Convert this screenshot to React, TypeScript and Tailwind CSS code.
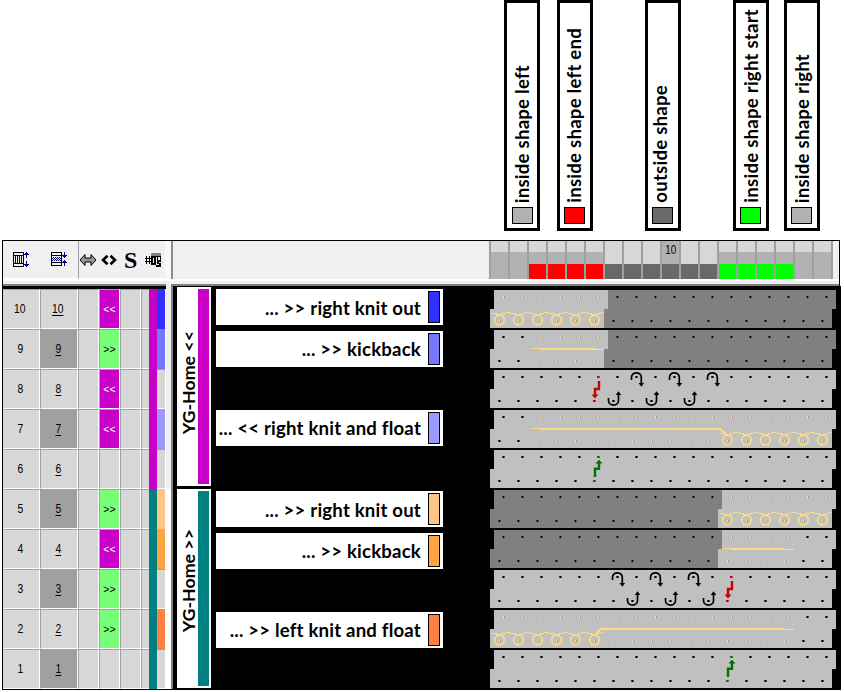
import clsx from "clsx";

type DotColor = "black" | "yellow" | "red" | "green";

interface KnitRow {
  no: number;
  dir?: "<<" | ">>";
  group: "left" | "right";
  tag?: string;
  // needle range covered by yarn, inclusive
  yarn?: [number, number];
  loops?: [number, number];
  // float line segments as [x1, x2, y, thickness]
  floats?: [number, number, number, number][];
  ramp?: string;
  shade?: "in" | "out";
  transferTop?: number[];
  transferBottom?: number[];
  carrier?: { needle: number; kind: "red" | "green" };
}

const PITCH = 19;
const NEEDLES = Array.from({ length: 18 }, (_, i) => i);

const ROWS: KnitRow[] = [
  { no: 10, dir: "<<", group: "left", tag: "bg-[#3030ff]", yarn: [0, 5], loops: [0, 5], shade: "out" },
  {
    no: 9,
    dir: ">>",
    group: "left",
    tag: "bg-[#7878ff]",
    yarn: [2, 5],
    floats: [
      [42, 51, 18, 1],
      [51, 105, 18, 2],
      [105, 114, 19, 1],
    ],
    shade: "out",
  },
  {
    no: 8,
    dir: "<<",
    group: "left",
    transferTop: [7, 9, 11],
    transferBottom: [6, 8, 10],
    carrier: { needle: 5, kind: "red" },
  },
  {
    no: 7,
    dir: "<<",
    group: "left",
    tag: "bg-[#9999ff]",
    yarn: [2, 17],
    loops: [12, 17],
    floats: [
      [42, 51, 18, 1],
      [51, 229, 18, 2],
    ],
    ramp: "M228 19 H230 L236 24",
  },
  { no: 6, group: "left", carrier: { needle: 5, kind: "green" } },
  { no: 5, dir: ">>", group: "right", tag: "bg-[#ffc488]", yarn: [12, 17], loops: [12, 17], shade: "in" },
  {
    no: 4,
    dir: "<<",
    group: "right",
    tag: "bg-[#ffa345]",
    yarn: [12, 15],
    floats: [
      [232, 241, 18, 1],
      [241, 295, 18, 2],
      [295, 304, 19, 1],
    ],
    shade: "in",
  },
  {
    no: 3,
    dir: ">>",
    group: "right",
    transferTop: [6, 8, 10],
    transferBottom: [7, 9, 11],
    carrier: { needle: 12, kind: "red" },
  },
  {
    no: 2,
    dir: ">>",
    group: "right",
    tag: "bg-[#ff8040]",
    yarn: [0, 15],
    loops: [0, 5],
    floats: [
      [111, 295, 18, 2],
      [295, 304, 19, 1],
    ],
    ramp: "M106 24 L111 19 H113",
  },
  { no: 1, group: "right", carrier: { needle: 12, kind: "green" } },
];

const LEGEND = [
  { text: "inside shape left", swatch: "ml-[5px] bg-[#b2b2b2]", box: "ml-[504px]", label: "ml-[4px]" },
  { text: "inside shape left end", swatch: "ml-1 bg-[#ff0000]", box: "ml-[17px]", label: "ml-[3px]" },
  { text: "outside shape", swatch: "ml-1 bg-[#696969]", box: "ml-[52px]", label: "ml-px" },
  { text: "inside shape right start", swatch: "ml-1 bg-[#00ff00]", box: "ml-[52px]", label: "ml-[4px]" },
  { text: "inside shape right", swatch: "ml-1 bg-[#b2b2b2]", box: "ml-[15px]", label: "ml-[4px]" },
];

const LABELS = [
  { text: "... >> right knit out", swatch: "bg-[#3030ff]", gap: "mt-[3px]", drop: "pt-[2px]" },
  { text: "... >> kickback", swatch: "bg-[#7878ff]", gap: "mt-[6px]", drop: "pt-px" },
  { text: "... << right knit and float", swatch: "bg-[#9999ff]", gap: "mt-[43px]", drop: "pt-px" },
  { text: "... >> right knit out", swatch: "bg-[#ffc488]", gap: "mt-[45px]", drop: "pt-[2px]" },
  { text: "... >> kickback", swatch: "bg-[#ffa345]", gap: "mt-[6px]", drop: "pt-px" },
  { text: "... >> left knit and float", swatch: "bg-[#ff8040]", gap: "mt-[43px]", drop: "pt-px" },
];

const DOTS: Record<DotColor, [string, string, string]> = {
  black: ["#20486c", "#000000", "#6c4828"],
  yellow: ["#f0a090", "#ffe690", "#a0a070"],
  red: ["#c80032", "#c80000", "#c83232"],
  green: ["#007832", "#007800", "#4a7a20"],
};

function Dot({ x, y, color }: { x: number; y: number; color: DotColor }) {
  return (
    <g shapeRendering="crispEdges">
      {DOTS[color].map((fill, i) => (
        <rect key={i} x={x + i} y={y} width={1} height={2} fill={fill} />
      ))}
    </g>
  );
}

function Loop({ x, last }: { x: number; last: boolean }) {
  const left = x - 0.5;
  return (
    <g fill="#fcdc84">
      <circle cx={x} cy={30} r={4.9} stroke="#f8dc84" strokeWidth={1.8} fill="none" />
      <g shapeRendering="crispEdges">
        <rect x={left - 7} y={23} width={5} height={1} />
        <rect x={left - 3} y={24} width={7} height={1} />
        <rect x={left + 3} y={23} width={4} height={1} />
        <rect x={left + 7} y={22} width={last ? 3 : 5} height={1} />
      </g>
    </g>
  );
}

/** One stitch row: front needle bed above, back bed shifted 4px to the left. */
function StitchRow({ row }: { row: KnitRow }) {
  const colorAt = (n: number): DotColor => {
    if (row.carrier?.needle === n) return row.carrier.kind;
    if (row.yarn && n >= row.yarn[0] && n <= row.yarn[1]) return "yellow";
    return "black";
  };
  const cx = row.carrier ? row.carrier.needle * PITCH + 13.5 : 0;

  return (
    <svg width={346} height={38} viewBox="0 0 346 38" className="block">
      <g shapeRendering="crispEdges">
        <path d="M4 0 H346 V19 H342 V38 H0 V19 H4 Z" fill="#c0c0c0" />
        {row.shade === "out" && <path d="M118 0 H346 V19 H342 V38 H114 V19 H118 Z" fill="#808080" />}
        {row.shade === "in" && <path d="M4 0 H232 V19 H228 V38 H0 V19 H4 Z" fill="#808080" />}
      </g>
      {row.floats?.map(([x1, x2, y, h]) => (
        <rect key={x1} x={x1} y={y} width={x2 - x1} height={h} fill="#fcdc84" />
      ))}
      {row.ramp && <path d={row.ramp} stroke="#fcdc84" strokeWidth={1.8} fill="none" />}
      {row.loops &&
        NEEDLES.filter((n) => n >= row.loops![0] && n <= row.loops![1]).map((n) => (
          <Loop key={n} x={n * PITCH + 9.5} last={n === row.loops![1]} />
        ))}
      {NEEDLES.map((n) => (
        <g key={n}>
          <Dot x={12 + n * PITCH} y={6} color={colorAt(n)} />
          <Dot x={8 + n * PITCH} y={30} color={colorAt(n)} />
        </g>
      ))}
      {row.transferTop?.map((n) => {
        const x = n * PITCH + 13.5;
        return (
          <g key={n}>
            <path
              d={`M${x - 5} 10 V7.5 C${x - 5} 1.2 ${x + 4.8} 1.2 ${x + 4.8} 7.5 V14`}
              stroke="#000"
              strokeWidth={1.7}
              fill="none"
            />
            <path d={`M${x + 2} 13 h5.6 l-2.8 3.8 z`} />
          </g>
        );
      })}
      {row.transferBottom?.map((n) => {
        const x = n * PITCH + 9.5;
        return (
          <g key={n}>
            <path
              d={`M${x - 5} 28 V30.5 C${x - 5} 36.6 ${x + 5} 36.6 ${x + 5} 30.5 V24`}
              stroke="#000"
              strokeWidth={1.7}
              fill="none"
            />
            <path d={`M${x + 2.2} 25 h5.6 l-2.8 -3.8 z`} />
          </g>
        );
      })}
      {row.carrier?.kind === "red" && (
        <g>
          <path d={`M${cx + 0.5} 11 V19 H${cx - 3.5} V26`} stroke="#c80000" strokeWidth={2.4} fill="none" />
          <path d={`M${cx - 7} 24.6 h7 l-3.5 3.8 z`} fill="#c80000" />
        </g>
      )}
      {row.carrier?.kind === "green" && (
        <g>
          <path d={`M${cx - 3.5} 27 V18.8 H${cx + 0.5} V12`} stroke="#007000" strokeWidth={2.4} fill="none" />
          <path d={`M${cx - 3} 13.6 h7 l-3.5 -3.8 z`} fill="#007000" />
        </g>
      )}
    </svg>
  );
}

function Legend() {
  return (
    <div className="flex h-[240px] items-start">
      {LEGEND.map((item) => (
        <div
          key={item.text}
          className={clsx(
            "flex h-[231px] w-9 shrink-0 flex-col items-start justify-end border-[3px] border-black pb-1",
            item.box,
          )}
        >
          <span
            className={clsx(
              "mb-[4px] rotate-180 whitespace-nowrap text-[18.6px] leading-[22px] font-bold tracking-[0.24px] [writing-mode:vertical-rl]",
              item.label,
            )}
          >
            {item.text}
          </span>
          <span className={clsx("h-[17px] w-[21px] shrink-0 border border-black", item.swatch)} />
        </div>
      ))}
    </div>
  );
}

function RowIcon({ tall }: { tall?: boolean }) {
  return (
    <svg width={18} height={18} viewBox="0 0 18 18" fill="none" shapeRendering="crispEdges">
      {tall ? (
        <>
          <path d="M.5 1 V16 M10.5 1 V16 M0 1.5 H11 M0 4.5 H11 M0 12.5 H11 M0 15.5 H11" stroke="#000" />
          <path d="M2.5 5 V12 M4.5 5 V12 M6.5 5 V12 M8.5 5 V12" stroke="#000080" />
          <path d="M13.5 1 V7 M13.5 10 V16 M12 2.5 H15 M11 3.5 h5 M11 13.5 h5 M12 14.5 H15" stroke="#000080" />
        </>
      ) : (
        <>
          <path d="M.5 1 V15 M10.5 1 V15 M0 1.5 H11 M0 4.5 H11 M0 11.5 H11 M0 14.5 H11" stroke="#000" />
          <path d="M2 6.5 H10 M2 8.5 H10" stroke="#000" strokeDasharray="1 1" />
          <path d="M1 7.5 H10 M1 9.5 H10" stroke="#000080" strokeDasharray="1 1" />
          <path d="M13.5 1 V7 M13.5 9 V15 M11 4.5 h5 M12 5.5 h3 M12 10.5 h3 M11 11.5 h5" stroke="#000080" />
        </>
      )}
    </svg>
  );
}

function Ruler() {
  return (
    <div className="flex h-[38px]">
      {NEEDLES.map((n) => {
        const outside = n >= 6 && n <= 11;
        return (
          <div key={n} className="flex w-[19px] flex-col border-l-2 border-[#a0a0a0]">
            <div
              className={clsx(
                "text-center text-[12px] leading-[19px]",
                n === 9 ? "bg-[#b2b2b2]" : "bg-[#d7d7d7]",
                outside ? "h-[23px]" : "h-[11px]",
              )}
            >
              {n === 9 && <span className="inline-block scale-x-[.82]">10</span>}
            </div>
            {!outside && <div className="h-3 bg-[#b2b2b2]" />}
            <div
              className={clsx(
                "h-[15px]",
                outside && "bg-[#696969]",
                n >= 2 && n <= 5 && "bg-[#ff0000]",
                n >= 12 && n <= 15 && "bg-[#00ff00]",
                (n < 2 || n > 15) && "bg-[#b2b2b2]",
              )}
            />
          </div>
        );
      })}
      <div className="w-0.5 bg-[#a0a0a0]" />
    </div>
  );
}

function Toolbar() {
  return (
    <div className="flex h-[46px] w-[838px] flex-col border-x border-t border-black bg-[#f0f0f0] font-['Liberation_Sans',sans-serif]">
      <div className="flex h-[38px]">
        <div className="flex h-[38px] w-[75px] items-center border-b border-white pl-[10px]">
          <RowIcon tall />
          <div className="w-5" />
          <RowIcon />
        </div>
        <div className="flex h-[38px] w-[87px] items-center border-b border-l border-b-white border-l-[#a0a0a0]">
          <svg width={18} height={14} viewBox="0 0 18 14">
            <path d="M1 7 L6 1.5 V5 H12 V1.5 L17 7 L12 12.5 V9 H6 V12.5 Z" fill="#969696" stroke="#000" />
          </svg>
          <svg width={16} height={14} viewBox="0 0 16 14" className="ml-1" fill="none" stroke="#000" strokeWidth={2.6}>
            <path d="M6.5 2.8 L2 7 L6.5 11.2 M9.5 2.8 L14 7 L9.5 11.2" />
          </svg>
          <span className="ml-[7px] w-[13px] text-center font-['Liberation_Serif',serif] text-2xl leading-none font-bold">
            S
          </span>
          <svg width={17} height={16} viewBox="0 0 17 16" className="ml-2" shapeRendering="crispEdges">
            <path d="M6 1 H16 V4 H6 Z" fill="#808080" />
            <path d="M0 6.5 H6 M0 9.5 H6 M1.5 4 V12 M4.5 4 V12" stroke="#000" />
            <path
              fillRule="evenodd"
              d="M6 4 H11 V13 H6 Z M8 6 V11 H9 V6 Z M11 4 H16 V10 H14 V11 H16 V15 H11 V13 H14 V12 H12 V5 H11 Z M13 5 V8 H15 V5 Z"
              fill="#000"
            />
          </svg>
        </div>
        <div className="w-[6px] bg-[#f8f8f8]" />
        <div className="h-[38px] w-[318px] border-l-2 border-[#8c8c8c]" />
        <Ruler />
      </div>
      <div className="h-[2px] bg-white" />
      <div className="h-[3px]" />
      <div className="flex h-[2px]">
        <div className="w-[163px] bg-[#808080]" />
        <div className="w-[5px]" />
        <div className="flex-1 bg-[#808080]" />
      </div>
    </div>
  );
}

const CELL = "h-10 shrink-0 border border-t-[#a0a0a0] border-l-[#a0a0a0] border-r-white border-b-white bg-[#d7d7d7]";

function RowTable() {
  return (
    <div className="w-[163px] border-t-[3px] border-black bg-white font-['Liberation_Sans',sans-serif] text-[12px] leading-[38px]">
      {ROWS.map((row) => (
        <div key={row.no} className="flex h-10 text-center text-black">
          <div className={clsx(CELL, "w-[37px] border-l-[#d7d7d7] pr-[3px]")}>
            <span className="inline-block scale-x-[.86]">{row.no}</span>
          </div>
          <div className={clsx(CELL, "w-[38px] pr-[2px]", row.no % 2 === 1 && "bg-[#a0a0a0]!")}>
            <span className="inline-block scale-x-[.86] underline underline-offset-2">{row.no}</span>
          </div>
          <div className={clsx(CELL, "w-[21px]")} />
          <div
            className={clsx(
              CELL,
              "w-[21px] text-[11px]",
              row.dir === "<<" && "bg-[#c800c8]! text-white",
              row.dir === ">>" && "bg-[#78ff78]!",
            )}
          >
            <span className="-mr-1 -ml-[5px] inline-block scale-x-95">{row.dir}</span>
          </div>
          <div className={clsx(CELL, "w-[21px]")} />
          <div className={clsx(CELL, "w-2 border-r-0")} />
          <div className={clsx("h-10 w-2", row.group === "left" ? "bg-[#c800c8]" : "bg-[#008080]")} />
          <div className={clsx("h-10 w-2", row.tag ?? "border-y border-t-[#a0a0a0] border-b-white bg-[#d7d7d7]")} />
        </div>
      ))}
    </div>
  );
}

function Group({ text, bar, label }: { text: string; bar: string; label: string }) {
  return (
    <div className="flex h-[199px] w-[34px] items-center justify-end bg-white py-[2px] pr-[2px]">
      <span
        className={clsx(
          "w-[19px] rotate-180 whitespace-nowrap text-center text-[17.8px] leading-[19px] font-bold [writing-mode:vertical-rl]",
          label,
        )}
      >
        {text}
      </span>
      <div className={clsx("h-full w-[11px]", bar)} />
    </div>
  );
}

export default function App() {
  return (
    <div className="h-[692px] w-[844px] overflow-hidden bg-white font-[Lato,sans-serif] text-black">
      <Legend />
      <div className="ml-0.5 w-[839px]">
        <Toolbar />
        <div className="flex h-[404px] border-b border-l border-black">
          <RowTable />
          <div className="flex w-[5px] flex-col">
            <div className="h-[203px] bg-[#f0f0f0]" />
            <div className="flex-1 bg-white" />
          </div>
          <div className="w-0.5 bg-[#808080]" />
          <div className="flex flex-1 bg-black">
            <div className="ml-1 flex flex-col gap-[3px] pt-px">
              <Group text="YG-Home <<" bar="bg-[#c800c8]" label="mb-[7px]" />
              <Group text="YG-Home >>" bar="bg-[#008080]" label="mb-[15px]" />
            </div>
            <div className="ml-[5px] w-[227px]">
              {LABELS.map((label, i) => (
                <div key={i} className={clsx("flex h-9 items-center justify-end bg-white pr-[3px]", label.gap)}>
                  <span
                    className={clsx(
                      "mr-[7px] whitespace-nowrap text-[18.6px] leading-none font-bold tracking-[0.2px]",
                      label.drop,
                    )}
                  >
                    {label.text}
                  </span>
                  <div className={clsx("h-8 w-3 border border-black", label.swatch)} />
                </div>
              ))}
            </div>
            <div className="ml-[47px] flex flex-col gap-0.5 pt-1">
              {ROWS.map((row) => (
                <StitchRow key={row.no} row={row} />
              ))}
            </div>
          </div>
        </div>
      </div>
    </div>
  );
}
